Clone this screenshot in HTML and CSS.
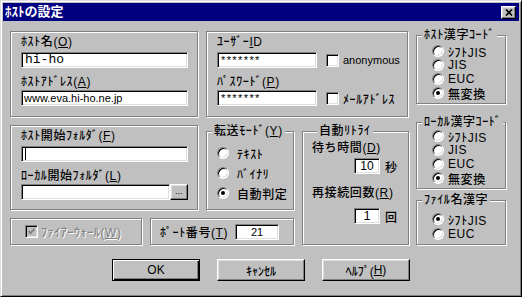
FILE: index.html
```html
<!DOCTYPE html>
<html lang="ja">
<head>
<meta charset="UTF-8">
<meta name="viewport" content="width=device-width, initial-scale=1.0">
<title>ﾎｽﾄの設定</title>
<link rel="stylesheet" href="styles.css">
</head>
<body>

<div class="window">
    <div class="titlebar">
        <span class="title">ﾎｽﾄの設定</span>
        <span class="close-btn">
            <svg width="8" height="7" viewBox="0 0 8 7"><path d="M1 0.5l6 6M7 0.5l-6 6" stroke="#000" stroke-width="1.7"/></svg>
        </span>
    </div>

    <div class="client">
        <div class="main">
            <div class="left">
                <div class="top-row">
                    <div class="panel host-panel">
                        <div class="label">ﾎｽﾄ名(<u>O</u>)</div>
                        <div class="edit host-edit mono">hi-ho</div>
                        <div class="label second">ﾎｽﾄｱﾄﾞﾚｽ(<u>A</u>)</div>
                        <div class="edit host-edit">www.eva.hi-ho.ne.jp</div>
                    </div>
                    <div class="panel user-panel">
                        <div class="label">ﾕｰｻﾞｰ<u>I</u>D</div>
                        <div class="field-row">
                            <div class="edit user-edit secret">*******</div>
                            <span class="check"></span>
                            <span class="check-label en">anonymous</span>
                        </div>
                        <div class="label second">ﾊﾟｽﾜｰﾄﾞ(<u>P</u>)</div>
                        <div class="field-row">
                            <div class="edit user-edit secret">*******</div>
                            <span class="check"></span>
                            <span class="check-label">ﾒｰﾙｱﾄﾞﾚｽ</span>
                        </div>
                    </div>
                </div>

                <div class="bottom">
                    <div class="panel folder-panel">
                        <div class="label">ﾎｽﾄ開始ﾌｫﾙﾀﾞ(<u>F</u>)</div>
                        <div class="edit host-edit"><span class="caret"></span></div>
                        <div class="label second">ﾛｰｶﾙ開始ﾌｫﾙﾀﾞ(<u>L</u>)</div>
                        <div class="field-row">
                            <div class="edit local-edit"></div>
                            <span class="btn browse-btn">...</span>
                        </div>
                    </div>

                    <div class="group transfer-group">
                        <div class="group-box">
                            <div class="group-title">転送ﾓｰﾄﾞ(<u>Y</u>)</div>
                            <div class="rows">
                                <div class="radio-row"><span class="radio"></span>ﾃｷｽﾄ</div>
                                <div class="radio-row"><span class="radio"></span>ﾊﾞｲﾅﾘ</div>
                                <div class="radio-row"><span class="radio on"></span>自動判定</div>
                            </div>
                        </div>
                    </div>

                    <div class="group retry-group">
                        <div class="group-box">
                            <div class="group-title">自動ﾘﾄﾗｲ</div>
                            <div class="label retry-label">待ち時間(<u>D</u>)</div>
                            <div class="field-row retry-row">
                                <div class="edit num-edit">10</div>
                                <span class="unit">秒</span>
                            </div>
                            <div class="label retry-label second-retry">再接続回数(<u>R</u>)</div>
                            <div class="field-row retry-row">
                                <div class="edit num-edit">1</div>
                                <span class="unit">回</span>
                            </div>
                        </div>
                    </div>

                    <div class="panel firewall-panel">
                        <span class="check disabled">
                            <svg width="7" height="7" viewBox="0 0 7 7"><path d="M0.5 3l2 2.2 4-4.4" fill="none" stroke="#808080" stroke-width="1.8"/></svg>
                        </span>
                        <span class="check-label grayed">ﾌｧｲｱｰｳｫｰﾙ(<u>W</u>)</span>
                    </div>

                    <div class="panel port-panel">
                        <span class="port-label">ﾎﾟｰﾄ番号(<u>T</u>)</span>
                        <div class="edit port-edit">21</div>
                    </div>
                </div>
            </div>

            <div class="right">
                <div class="group host-code">
                    <div class="group-box">
                        <div class="group-title">ﾎｽﾄ漢字ｺｰﾄﾞ</div>
                        <div class="rows">
                            <div class="radio-row"><span class="radio"></span>ｼﾌﾄJIS</div>
                            <div class="radio-row"><span class="radio"></span>JIS</div>
                            <div class="radio-row"><span class="radio"></span>EUC</div>
                            <div class="radio-row"><span class="radio on"></span>無変換</div>
                        </div>
                    </div>
                </div>
                <div class="group local-code">
                    <div class="group-box">
                        <div class="group-title">ﾛｰｶﾙ漢字ｺｰﾄﾞ</div>
                        <div class="rows">
                            <div class="radio-row"><span class="radio"></span>ｼﾌﾄJIS</div>
                            <div class="radio-row"><span class="radio"></span>JIS</div>
                            <div class="radio-row"><span class="radio"></span>EUC</div>
                            <div class="radio-row"><span class="radio on"></span>無変換</div>
                        </div>
                    </div>
                </div>
                <div class="group name-code">
                    <div class="group-box">
                        <div class="group-title">ﾌｧｲﾙ名漢字</div>
                        <div class="rows">
                            <div class="radio-row"><span class="radio on"></span>ｼﾌﾄJIS</div>
                            <div class="radio-row"><span class="radio"></span>EUC</div>
                        </div>
                    </div>
                </div>
            </div>
        </div>

        <div class="buttons">
            <span class="btn dialog-btn default">OK</span>
            <span class="btn dialog-btn">ｷｬﾝｾﾙ</span>
            <span class="btn dialog-btn">ﾍﾙﾌﾟ(<u>H</u>)</span>
        </div>
    </div>
</div>

</body>
</html>
```

FILE: styles.css
```css
html, body {
    margin: 0;
    padding: 0;
    overflow: hidden;
    background-color: #c0c0c0;
    font-family: "Liberation Sans", "Noto Sans CJK JP", sans-serif;
    font-size: 12px;
    font-weight: 500;
    color: #000;
}
u { text-underline-offset: 1px; }

/* marco de la ventana */
.window {
    width: 522px;
    height: 297px;
    box-sizing: border-box;
    padding: 2px;
    border: 1px solid;
    border-color: #dfdfdf #000 #000 #dfdfdf;
    box-shadow: inset 1px 1px #fff, inset -1px -1px #808080;
    background-color: #c0c0c0;
}
.titlebar {
    height: 18px;
    background-color: #000080;
    display: flex;
    align-items: center;
    justify-content: space-between;
    padding: 0 3px 0 2px;
}
.title {
    color: #fff;
    font-weight: bold;
    font-size: 13px;
    line-height: 18px;
}
.close-btn {
    width: 15px;
    height: 13px;
    box-sizing: border-box;
    display: flex;
    align-items: center;
    justify-content: center;
    background-color: #c0c0c0;
    border: 1px solid;
    border-color: #fff #000 #000 #fff;
    box-shadow: inset -1px -1px #808080, inset 1px 1px #dfdfdf;
}

.client {
    padding: 10px 0 0 7px;
}
.main {
    display: flex;
    gap: 8px;
}
.left { width: 398px; }
.right {
    width: 90px;
    margin-top: -2px;
    display: flex;
    flex-direction: column;
}

/* paneles grabados */
.panel, .group-box {
    box-sizing: border-box;
    border: 1px solid #808080;
    box-shadow: 1px 1px #fff, inset 1px 1px #fff;
}
.top-row {
    display: flex;
    gap: 8px;
    height: 86px;
}
.host-panel { width: 188px; padding: 2px 0 0 10px; }
.user-panel { width: 202px; padding: 2px 0 0 10px; }

/* los kana de ancho medio quedan estrechos, se abren un poco */
.label, .group-title, .radio-row, .check-label, .port-label {
    letter-spacing: 0.6px;
}

.label {
    line-height: 16px;
    height: 16px;
    white-space: nowrap;
}
.label + .edit, .label + .field-row { margin-top: 2px; }
.label.second { margin-top: 6px; }
.label.second + .edit, .label.second + .field-row { margin-top: 0; }

.field-row {
    display: flex;
    align-items: center;
    height: 16px;
}

/* cajas de texto hundidas */
.edit {
    height: 16px;
    box-sizing: border-box;
    padding: 0 2px;
    border: 1px solid;
    border-color: #808080 #fff #fff #808080;
    box-shadow: inset 1px 1px #000, inset -1px -1px #dfdfdf;
    background-color: #fff;
    font-size: 11px;
    line-height: 14px;
    white-space: nowrap;
    overflow: hidden;
}
.edit.mono {
    font-family: "Liberation Mono", monospace;
    font-size: 13px;
    padding-left: 3px;
}
.host-edit { width: 167px; }
.user-edit { width: 100px; margin-right: 9px; }
.local-edit { width: 149px; }
.secret { letter-spacing: 1.4px; padding-left: 3px; }
.caret {
    display: inline-block;
    width: 1px;
    height: 12px;
    margin: 1px 0 0 1px;
    background-color: #000;
    vertical-align: top;
}

.check {
    width: 13px;
    height: 13px;
    box-sizing: border-box;
    flex-shrink: 0;
    display: flex;
    align-items: center;
    justify-content: center;
    border: 1px solid;
    border-color: #808080 #fff #fff #808080;
    box-shadow: inset 1px 1px #000, inset -1px -1px #dfdfdf;
    background-color: #fff;
}
.check.disabled { background-color: #c0c0c0; }
.check-label {
    margin-left: 4px;
    white-space: nowrap;
}
.check-label.en { font-size: 11px; letter-spacing: 0; }
.grayed {
    color: #808080;
    text-shadow: 1px 1px #fff;
    margin-left: 3px;
}

/* botones */
.btn {
    box-sizing: border-box;
    display: flex;
    align-items: center;
    justify-content: center;
    background-color: #c0c0c0;
    border: 1px solid;
    border-color: #fff #000 #000 #fff;
    box-shadow: inset -1px -1px #808080, inset 1px 1px #dfdfdf;
}
.browse-btn {
    width: 18px;
    height: 16px;
    font-size: 9px;
    line-height: 9px;
    align-items: flex-end;
    padding-bottom: 3px;
}

.bottom {
    display: grid;
    grid-template-columns: 132px 48px 88px 107px;
    grid-template-rows: 85px 27px;
    gap: 8px;
    margin-top: 8px;
}
.folder-panel {
    grid-column: 1 / 3;
    grid-row: 1;
    padding: 2px 0 0 10px;
}
.transfer-group { grid-column: 3; grid-row: 1; }
.retry-group { grid-column: 4; grid-row: 1 / 3; }
.firewall-panel {
    grid-column: 1;
    grid-row: 2;
    display: flex;
    align-items: center;
    padding-left: 14px;
}
.port-panel {
    grid-column: 2 / 4;
    grid-row: 2;
    display: flex;
    align-items: center;
    padding-left: 9px;
}
.port-label {
    width: 75px;
    white-space: nowrap;
}
.port-edit { width: 44px; text-align: center; }

/* grupos con titulo */
.group {
    box-sizing: border-box;
    padding-top: 6px;
    display: flex;
    flex-direction: column;
}
.group-box { flex: 1; }
.group-title {
    width: fit-content;
    margin: -8px 0 0 5px;
    padding: 0 2px;
    line-height: 14px;
    white-space: nowrap;
    background-color: #c0c0c0;
}

.radio-row {
    display: flex;
    align-items: center;
    gap: 4px;
    height: 14px;
    white-space: nowrap;
}
.radio {
    width: 12px;
    height: 12px;
    box-sizing: border-box;
    flex-shrink: 0;
    display: flex;
    align-items: center;
    justify-content: center;
    border-radius: 50%;
    border: 1px solid;
    border-color: #808080 #fff #fff #808080;
    box-shadow: inset 1px 1px #000, inset -1px -1px #dfdfdf;
    background-color: #fff;
}
.radio.on::after {
    content: "";
    width: 4px;
    height: 4px;
    border-radius: 50%;
    background-color: #000;
}

.transfer-group .rows { margin-top: 5px; padding-left: 10px; }
.transfer-group .radio-row { height: 20px; gap: 8px; }

.retry-group .group-box { padding-left: 9px; }
.retry-label { margin-top: 2px; }
.retry-label.second-retry { margin-top: 11px; }
.retry-row { margin-top: 6px; }
.second-retry + .retry-row { margin-top: 7px; }
.num-edit {
    width: 26px;
    margin-left: 42px;
    text-align: center;
    font-size: 12px;
}
.unit { margin-left: 5px; }

.right .rows { padding-left: 15px; }
.host-code { height: 75px; }
.host-code .rows { margin-top: 2px; }
.local-code { height: 73px; margin-top: 12px; }
.name-code { height: 51px; margin-top: 5px; }
.name-code .rows {
    margin-top: 5px;
    display: flex;
    flex-direction: column;
    gap: 1px;
}

.buttons {
    display: flex;
    gap: 17px;
    margin-top: 14px;
    padding-left: 102px;
}
.dialog-btn {
    width: 88px;
    height: 22px;
}
.dialog-btn.default {
    border-color: #000;
    box-shadow: inset 1px 1px #fff, inset -1px -1px #000, inset -2px -2px #808080;
}
```
